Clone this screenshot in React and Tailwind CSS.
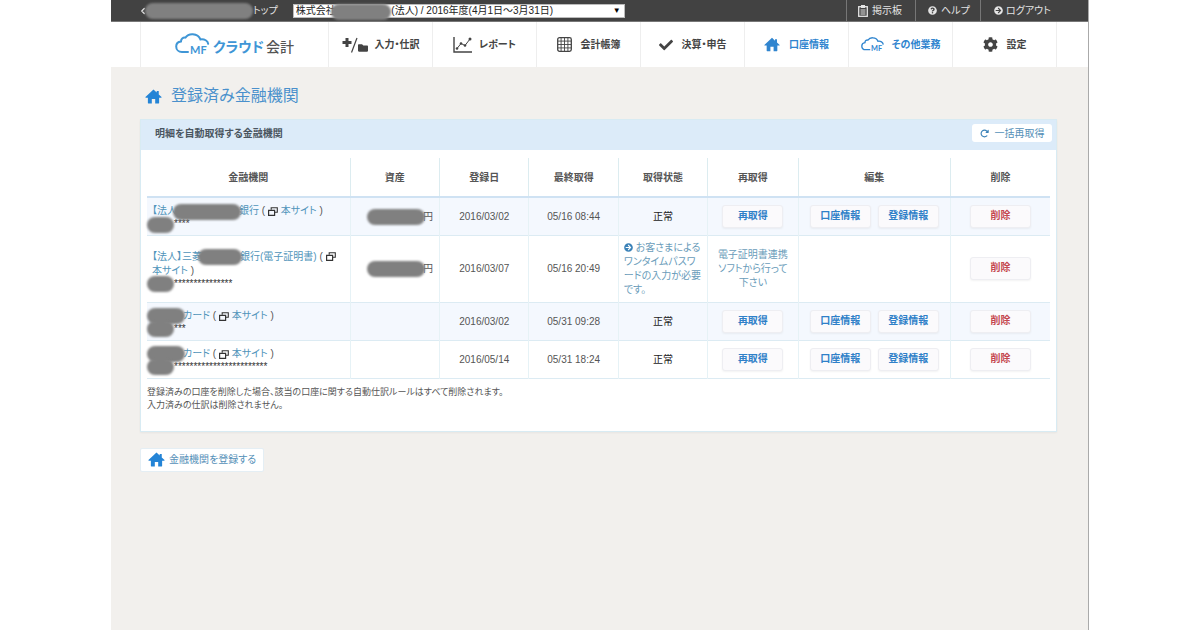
import { clsx } from 'clsx';
import { FaCog, FaCheck, FaFolder, FaQuestionCircle, FaArrowCircleRight } from 'react-icons/fa';
import { FaRotateRight } from 'react-icons/fa6';
import { ChevronLeft } from 'lucide-react';

const rows = [
  {
    name: ['【法人', 'bank1', '銀行'],
    stars: '****',
    asset: true,
    registered: '2016/03/02',
    fetched: '05/16 08:44',
  },
  {
    name: ['【法人】三菱', 'bank2', '銀行(電子証明書)'],
    stars: '***************',
    asset: true,
    registered: '2016/03/07',
    fetched: '05/16 20:49',
    needsPassword: true,
  },
  {
    name: ['', 'card', 'カード'],
    stars: '***',
    registered: '2016/03/02',
    fetched: '05/31 09:28',
  },
  {
    name: ['', 'card', 'カード'],
    stars: '************************',
    registered: '2016/05/14',
    fetched: '05/31 18:24',
  },
];

const columns = [
  { label: '金融機関', width: 'w-[22.5%]' },
  { label: '資産', width: 'w-[9.9%]' },
  { label: '登録日', width: 'w-[9.9%]' },
  { label: '最終取得', width: 'w-[9.9%]' },
  { label: '取得状態', width: 'w-[9.9%]' },
  { label: '再取得', width: 'w-[10%]' },
  { label: '編集', width: 'w-[16.9%]' },
  { label: '削除', width: 'w-[11%]' },
];

const maskSizes = {
  bank1: 'w-[68px] h-4 -ml-1 -mr-[2px]',
  bank2: 'w-[44px] h-4 -ml-1 -mr-[2px]',
  card: 'w-[38px] h-4 -ml-[5px] -mr-[2px]',
  id: 'w-[27px] h-4 -ml-[5px]',
  asset: 'w-[58px] h-4 -mr-[2px]',
  office: 'w-[108px] h-4',
};

function Mask({ size }) {
  return (
    <span className={clsx('relative inline-block shrink-0 align-middle -my-1 rounded-full bg-[#808080] blur-[1px]', maskSizes[size])} />
  );
}

function HomeIcon({ className }) {
  return (
    <svg viewBox="0 0 18 16" fill="currentColor" className={className} aria-hidden="true">
      <path d="M9 0.5 L0.4 8.6 Q0.2 9.2 0.9 9.2 L3 9.2 L3 15 Q3 15.5 3.5 15.5 L7.2 15.5 L7.2 10.6 L10.8 10.6 L10.8 15.5 L14.5 15.5 Q15 15.5 15 15 L15 9.2 L17.1 9.2 Q17.8 9.2 17.6 8.6 L14.6 5.8 L14.6 2 L12.4 2 L12.4 3.7 Z" />
    </svg>
  );
}

function CloudIcon({ className }) {
  return (
    <svg viewBox="0 0 36 24" fill="none" className={clsx('overflow-visible', className)} aria-hidden="true">
      <path
        d="M13 19 H7 C3.5 19 1.2 16.6 1.2 13.4 C1.2 10.6 3.2 8.7 6 8.4 C6 5.8 7.8 4.3 10.4 4.6 C12 2.2 14.6 1 17.8 1.2 C21.8 1.4 24.4 3.4 25.4 6.4 C29.6 5.8 32.8 7.8 33.2 10.8"
        stroke="currentColor"
        strokeWidth="2"
        strokeLinecap="round"
      />
      <text x="15" y="21" fontSize="11" fontWeight="700" fontFamily="Lato, sans-serif" fill="currentColor">MF</text>
    </svg>
  );
}

function ChartIcon() {
  return (
    <svg viewBox="0 0 19 16" className="w-[19px] h-4" fill="none" stroke="currentColor" aria-hidden="true">
      <path d="M1 0 V15 H19" strokeWidth="1.4" />
      <path d="M4 11.5 L8 6.5 L12 8.5 L17 2" strokeWidth="1" />
      <g fill="currentColor" stroke="none">
        <circle cx="4" cy="11.5" r="1.3" />
        <circle cx="8" cy="6.5" r="1.3" />
        <circle cx="12" cy="8.5" r="1.3" />
        <circle cx="17" cy="2" r="1.5" />
      </g>
    </svg>
  );
}

function GridIcon() {
  return (
    <svg viewBox="0 0 15 15" className="w-[15px] h-[15px]" fill="none" stroke="currentColor" aria-hidden="true">
      <rect x="0.7" y="0.7" width="13.6" height="13.6" rx="1.8" strokeWidth="1.3" />
      <path d="M4.1 1V14 M7.5 1V14 M10.9 1V14 M1 4.1H14 M1 7.5H14 M1 10.9H14" strokeWidth="0.9" />
    </svg>
  );
}

function ClipboardIcon() {
  return (
    <svg viewBox="0 0 10 12" className="w-[10px] h-3" fill="none" stroke="currentColor" aria-hidden="true">
      <rect x="0.7" y="1.7" width="8.6" height="9.6" strokeWidth="1.3" />
      <rect x="3" y="0" width="4" height="3" fill="currentColor" stroke="none" />
      <path d="M2.5 5H7.5 M2.5 7H7.5 M2.5 9H7.5" strokeWidth="1" />
    </svg>
  );
}

function WindowsIcon() {
  return (
    <svg viewBox="0 0 10 9" className="inline w-[10px] h-[9px] text-[#333]" fill="none" stroke="currentColor" aria-hidden="true">
      <path d="M3.2 2.8 V0.8 H9.3 V5.2 H7" strokeWidth="1.1" />
      <path d="M0.6 3.4 H6.6 V8.3 H0.6 Z" strokeWidth="1.2" />
    </svg>
  );
}

function JournalIcon() {
  return (
    <svg viewBox="0 0 26 16" className="w-[26px] h-4" stroke="currentColor" aria-hidden="true">
      <path d="M5 1 V10 M0.5 5.5 H9.5" strokeWidth="3" />
      <path d="M9.5 15.5 L15 1" strokeWidth="1.2" />
      <FaFolder x="16" y="6" width="10" height="10" stroke="none" />
    </svg>
  );
}

const navItems = [
  { label: '入力・仕訳', icon: <JournalIcon />, gap: 'gap-[7px]' },
  { label: 'レポート', icon: <ChartIcon />, gap: 'gap-[7px]' },
  { label: '会計帳簿', icon: <GridIcon />, gap: 'gap-[9px]' },
  { label: '決算・申告', icon: <FaCheck className="size-[14px]" />, gap: 'gap-[9px]' },
  { label: '口座情報', icon: <HomeIcon className="w-4 h-[15px]" />, gap: 'gap-[9px]', active: true },
  { label: 'その他業務', icon: <CloudIcon className="w-6 h-4" />, gap: 'gap-[7px]', active: true },
  { label: '設定', icon: <FaCog className="size-[15px]" />, gap: 'gap-[9px]' },
];

function TopBar() {
  return (
    <div className="flex h-[22px] items-center border-b border-[#777] bg-[#424242] pl-[29px] text-[#e4e4e4]">
      <a href="#" className="flex items-center">
        <ChevronLeft className="size-[10px] -ml-[2px]" strokeWidth={3} />
        <span className="-ml-[3px] flex"><Mask size="office" /></span>
        トップ
      </a>
      <div className="relative ml-[15px] w-[35%]">
        <select
          aria-label="事業者・年度"
          className="block h-[14px] w-full appearance-none border border-[#bbb] bg-white pl-[2px] leading-[12px] text-[#222]"
        >
          <option>{'株式会社' + '\u00a0'.repeat(20) + '(法人) / 2016年度(4月1日～3月31日)'}</option>
        </select>
        <span className="pointer-events-none absolute left-[38px] top-0 h-4 w-[60px] rounded-full bg-[#808080] blur-[1px]" />
        <span className="pointer-events-none absolute right-1 top-[2px] text-[8px] leading-[10px] text-black">▼</span>
      </div>
      <div className="ml-auto flex h-full w-[242px]">
        <a href="#" className="flex w-[69px] items-center gap-1 border-l border-[#777] pl-[11px]">
          <ClipboardIcon />
          掲示板
        </a>
        <a href="#" className="flex w-[65px] items-center gap-1 border-l border-[#777] pl-[12px]">
          <FaQuestionCircle className="size-[9px]" />
          ヘルプ
        </a>
        <a href="#" className="flex items-center gap-[3px] border-l border-[#777] pl-[13px]">
          <FaArrowCircleRight className="size-[9px]" />
          ログアウト
        </a>
      </div>
    </div>
  );
}

function Nav() {
  return (
    <nav className="bg-white pl-[29px] pr-[31px]">
      <div className="flex h-[45px] border-x border-[#eee]">
        <a href="#" className="flex w-[187px] shrink-0 items-center justify-center gap-[2px] text-[14px] font-bold leading-5">
          <CloudIcon className="w-9 h-6 text-[#3f96d6]" />
          <span className="pt-1 text-[#3f96d6]">クラウド</span>
          <span className="pt-1 font-medium text-[#555]">会計</span>
        </a>
        {navItems.map((item) => (
          <a
            href="#"
            key={item.label}
            className={clsx(
              'flex flex-1 items-center justify-center border-l border-[#eee] font-bold',
              item.gap,
              item.active ? 'text-[#3085cf]' : 'text-[#444]'
            )}
          >
            {item.icon}
            {item.label}
          </a>
        ))}
      </div>
    </nav>
  );
}

function RowButton({ danger, children }) {
  return (
    <button
      type="button"
      className={clsx(
        'h-[23px] w-[61px] rounded-[3px] border border-[#eeeef2] bg-[#fbfafc] pb-[2px] font-bold shadow-xs',
        danger ? 'text-[#c4474f]' : 'text-[#2f80c8]'
      )}
    >
      {children}
    </button>
  );
}

function BankRow({ row }) {
  const [before, mask, after] = row.name;
  const cell = 'border-l border-[#e6f2f6] text-center';
  return (
    <tr className="h-[38px] border-b border-[#dcebf3] odd:bg-[#f4f8fe]">
      <td className="pl-[5px] pr-2 pt-[2px]">
        <div className="leading-[14px]">
          <a href="#" className="text-[#4f94ba]">{before}<Mask size={mask} />{after}</a>
          {' ( '}
          <WindowsIcon />
          <a href="#" className="text-[#4f94ba]"> 本サイト</a>
          {' )'}
        </div>
        <div className="h-3 leading-[12px] text-[#333]"><Mask size="id" />{row.stars}</div>
      </td>
      <td className={clsx(cell, 'pr-[6px]')}>
        {row.asset && <div className="text-right"><Mask size="asset" />円</div>}
      </td>
      <td className={cell}>{row.registered}</td>
      <td className={cell}>{row.fetched}</td>
      {row.needsPassword ? (
        <>
          <td className="border-l border-[#e6f2f6] px-[5px] py-[5px] text-left leading-[14px] text-[#6a9cba]">
            <a href="#">
              <FaArrowCircleRight className="inline size-[9px] text-[#3b82b8]" /> お客さまによる<br />
              ワンタイムパスワ<br />ードの入力が必要<br />です。
            </a>
          </td>
          <td className={clsx(cell, 'leading-[14px] text-[#6a9cba]')}>
            電子証明書連携<br />ソフトから行って<br />下さい
          </td>
          <td className={cell} />
        </>
      ) : (
        <>
          <td className={clsx(cell, 'text-[#222]')}>正常</td>
          <td className={cell}><RowButton>再取得</RowButton></td>
          <td className={cell}>
            <div className="flex justify-center gap-[7px]">
              <RowButton>口座情報</RowButton>
              <RowButton>登録情報</RowButton>
            </div>
          </td>
        </>
      )}
      <td className={cell}><RowButton danger>削除</RowButton></td>
    </tr>
  );
}

export default function App() {
  return (
    <div className="min-h-screen bg-white">
      <div className="mx-auto min-h-screen w-[81.5%] border-r border-[#aaa] bg-[#f2f0ed] text-[10px] leading-[13px] text-[#555] font-['Liberation_Sans','Noto_Sans_CJK_JP',sans-serif] [font-feature-settings:'palt']">
        <TopBar />
        <Nav />
        <main className="pl-[29px] pr-[31px]">
          <h1 className="flex items-center gap-[9px] pb-[11px] pl-[5px] pt-[17px] text-[16px] leading-6 text-[#4a90cc]">
            <HomeIcon className="w-[17px] h-[15px] text-[#2484d6]" />
            登録済み金融機関
          </h1>

          <section className="border border-[#d8ebf3] bg-white shadow-xs">
            <header className="flex h-[30px] items-center justify-between bg-[#dcebf9] pl-[14px] pr-1">
              <h2 className="pb-1 font-bold text-[#4a5560]">明細を自動取得する金融機関</h2>
              <button type="button" className="mb-1 flex h-[18px] w-20 items-center justify-center gap-[6px] rounded-[3px] bg-white text-[#5590b8]">
                <FaRotateRight className="size-[9px] text-[#3b82b8]" />
                一括再取得
              </button>
            </header>
            <div className="px-[6px] pb-[19px] pt-2">
              <table className="w-full table-fixed border-collapse">
                <thead>
                  <tr className="h-[39px] border-b-2 border-[#cfe2f3]">
                    {columns.map((col) => (
                      <th key={col.label} className={clsx('border-l border-[#dcecf0] font-bold first:border-l-0', col.width)}>
                        {col.label}
                      </th>
                    ))}
                  </tr>
                </thead>
                <tbody>
                  {rows.map((row) => (
                    <BankRow key={row.registered + row.fetched} row={row} />
                  ))}
                </tbody>
              </table>
              <p className="mt-[7px] text-[9px]">
                登録済みの口座を削除した場合、該当の口座に関する自動仕訳ルールはすべて削除されます。
                <br />
                入力済みの仕訳は削除されません。
              </p>
            </div>
          </section>

          <a href="#" className="mt-4 inline-flex h-6 items-center gap-1 rounded-[2px] border border-[#e4eef4] bg-white px-[7px] text-[#5590b8]">
            <HomeIcon className="w-[17px] h-[15px] text-[#2484d6]" />
            金融機関を登録する
          </a>
        </main>
      </div>
    </div>
  );
}
